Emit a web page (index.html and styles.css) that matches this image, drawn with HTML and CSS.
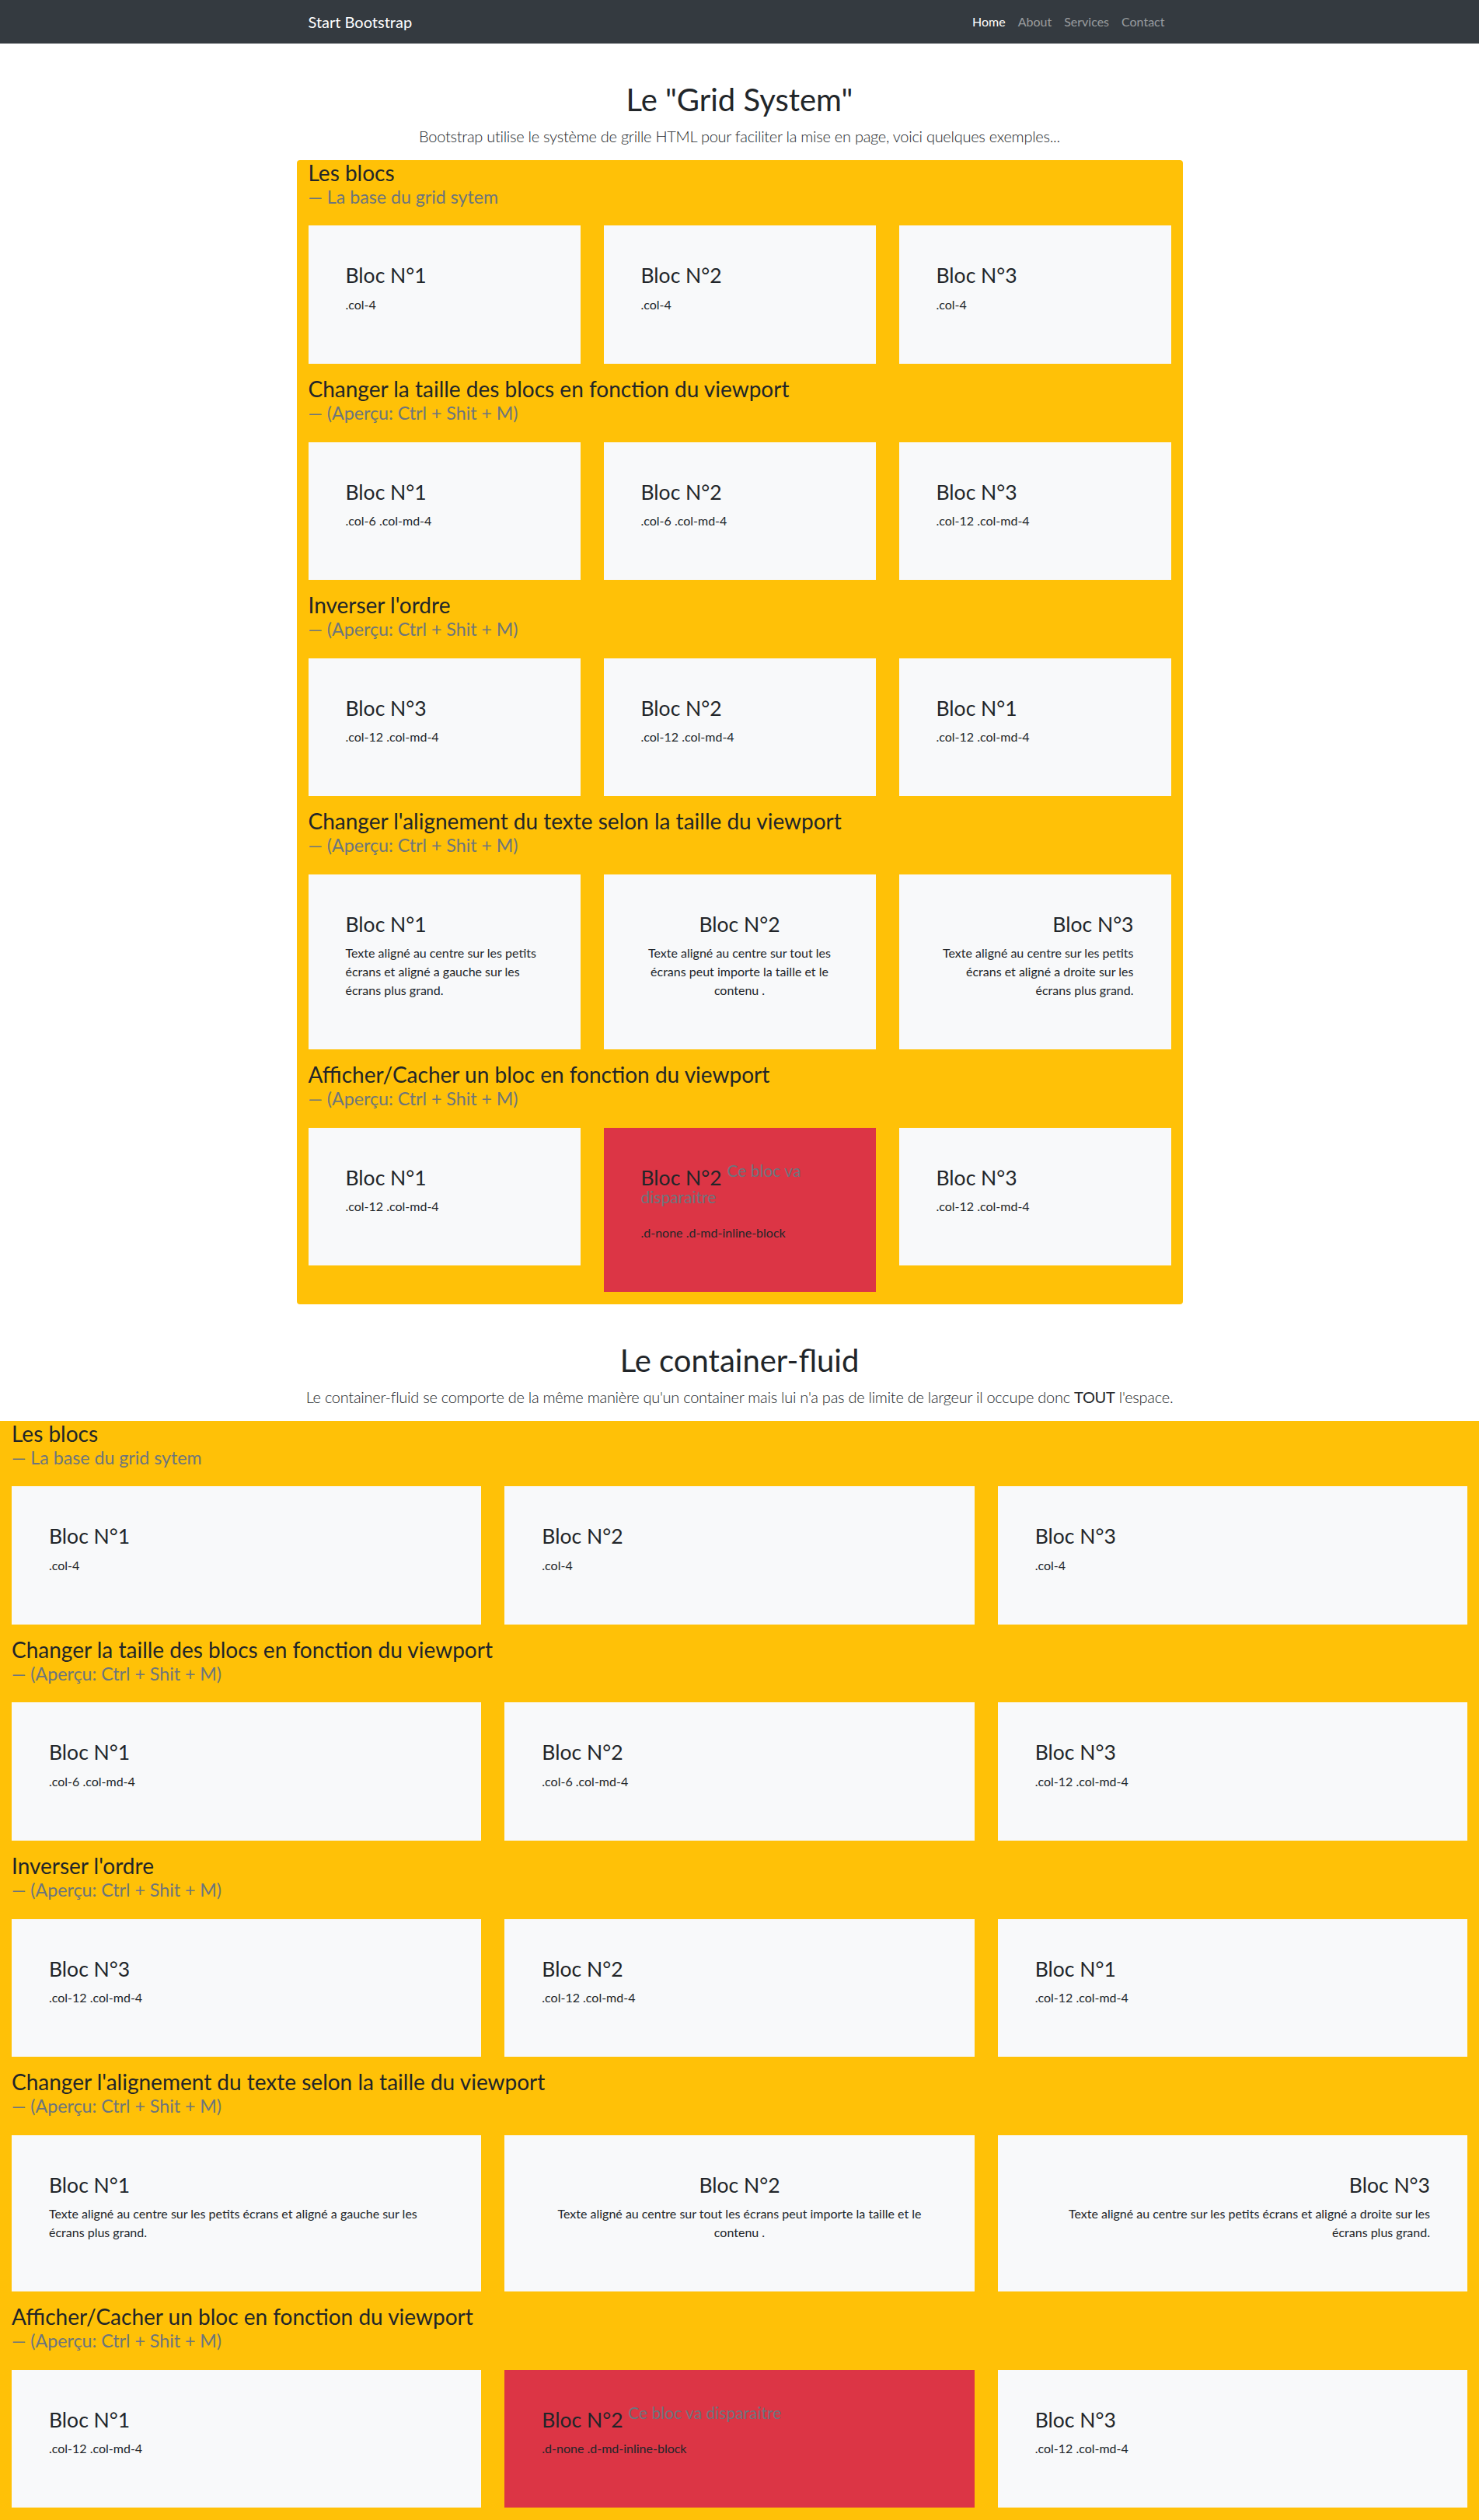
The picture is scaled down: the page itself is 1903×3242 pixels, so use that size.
FILE: index.html
```html
<!DOCTYPE html>
<html lang="fr">
<head>
<meta charset="utf-8">
<title>Grid System</title>
<link rel="stylesheet" href="styles.css">
</head>
<body>
<nav class="navbar">
  <div class="nav-inner">
    <a class="brand" href="#">Start Bootstrap</a>
    <ul class="nav-links">
      <li><a class="nav-link active" href="#">Home</a></li>
      <li><a class="nav-link" href="#">About</a></li>
      <li><a class="nav-link" href="#">Services</a></li>
      <li><a class="nav-link" href="#">Contact</a></li>
    </ul>
  </div>
</nav>

<header class="intro">
  <h1 class="intro-title">Le "Grid System"</h1>
  <p class="lead">Bootstrap utilise le système de grille HTML pour faciliter la mise en page, voici quelques exemples...</p>
</header>

<main class="box box-fixed">
  <h3 class="sec-title">Les blocs<span class="sec-sub">La base du grid sytem</span></h3>
  <div class="row">
    <div class="col"><div class="card"><h3 class="card-title">Bloc N°1</h3><p class="card-text">.col-4</p></div></div>
    <div class="col"><div class="card"><h3 class="card-title">Bloc N°2</h3><p class="card-text">.col-4</p></div></div>
    <div class="col"><div class="card"><h3 class="card-title">Bloc N°3</h3><p class="card-text">.col-4</p></div></div>
  </div>

  <h3 class="sec-title">Changer la taille des blocs en fonction du viewport<span class="sec-sub">(Aperçu: Ctrl + Shit + M)</span></h3>
  <div class="row">
    <div class="col"><div class="card"><h3 class="card-title">Bloc N°1</h3><p class="card-text">.col-6 .col-md-4</p></div></div>
    <div class="col"><div class="card"><h3 class="card-title">Bloc N°2</h3><p class="card-text">.col-6 .col-md-4</p></div></div>
    <div class="col"><div class="card"><h3 class="card-title">Bloc N°3</h3><p class="card-text">.col-12 .col-md-4</p></div></div>
  </div>

  <h3 class="sec-title">Inverser l'ordre<span class="sec-sub">(Aperçu: Ctrl + Shit + M)</span></h3>
  <div class="row">
    <div class="col"><div class="card"><h3 class="card-title">Bloc N°3</h3><p class="card-text">.col-12 .col-md-4</p></div></div>
    <div class="col"><div class="card"><h3 class="card-title">Bloc N°2</h3><p class="card-text">.col-12 .col-md-4</p></div></div>
    <div class="col"><div class="card"><h3 class="card-title">Bloc N°1</h3><p class="card-text">.col-12 .col-md-4</p></div></div>
  </div>

  <h3 class="sec-title">Changer l'alignement du texte selon la taille du viewport<span class="sec-sub">(Aperçu: Ctrl + Shit + M)</span></h3>
  <div class="row">
    <div class="col"><div class="card"><h3 class="card-title">Bloc N°1</h3><p class="card-text">Texte aligné au centre sur les petits écrans et aligné a gauche sur les écrans plus grand.</p></div></div>
    <div class="col"><div class="card align-center"><h3 class="card-title">Bloc N°2</h3><p class="card-text">Texte aligné au centre sur tout les écrans peut importe la taille et le contenu .</p></div></div>
    <div class="col"><div class="card align-right"><h3 class="card-title">Bloc N°3</h3><p class="card-text">Texte aligné au centre sur les petits écrans et aligné a droite sur les écrans plus grand.</p></div></div>
  </div>

  <h3 class="sec-title">Afficher/Cacher un bloc en fonction du viewport<span class="sec-sub">(Aperçu: Ctrl + Shit + M)</span></h3>
  <div class="row">
    <div class="col"><div class="card"><h3 class="card-title">Bloc N°1</h3><p class="card-text">.col-12 .col-md-4</p></div></div>
    <div class="col"><div class="card card-danger"><h3 class="card-title">Bloc N°2 <sup class="muted-sup">Ce bloc va disparaitre</sup></h3><p class="card-text">.d-none .d-md-inline-block</p></div></div>
    <div class="col"><div class="card"><h3 class="card-title">Bloc N°3</h3><p class="card-text">.col-12 .col-md-4</p></div></div>
  </div>
</main>

<header class="intro">
  <h1 class="intro-title">Le container-fluid</h1>
  <p class="lead">Le container-fluid se comporte de la même manière qu'un container mais lui n'a pas de limite de largeur il occupe donc <strong class="strong">TOUT</strong> l'espace.</p>
</header>

<section class="box box-fluid">
  <h3 class="sec-title">Les blocs<span class="sec-sub">La base du grid sytem</span></h3>
  <div class="row">
    <div class="col"><div class="card"><h3 class="card-title">Bloc N°1</h3><p class="card-text">.col-4</p></div></div>
    <div class="col"><div class="card"><h3 class="card-title">Bloc N°2</h3><p class="card-text">.col-4</p></div></div>
    <div class="col"><div class="card"><h3 class="card-title">Bloc N°3</h3><p class="card-text">.col-4</p></div></div>
  </div>

  <h3 class="sec-title">Changer la taille des blocs en fonction du viewport<span class="sec-sub">(Aperçu: Ctrl + Shit + M)</span></h3>
  <div class="row">
    <div class="col"><div class="card"><h3 class="card-title">Bloc N°1</h3><p class="card-text">.col-6 .col-md-4</p></div></div>
    <div class="col"><div class="card"><h3 class="card-title">Bloc N°2</h3><p class="card-text">.col-6 .col-md-4</p></div></div>
    <div class="col"><div class="card"><h3 class="card-title">Bloc N°3</h3><p class="card-text">.col-12 .col-md-4</p></div></div>
  </div>

  <h3 class="sec-title">Inverser l'ordre<span class="sec-sub">(Aperçu: Ctrl + Shit + M)</span></h3>
  <div class="row">
    <div class="col"><div class="card"><h3 class="card-title">Bloc N°3</h3><p class="card-text">.col-12 .col-md-4</p></div></div>
    <div class="col"><div class="card"><h3 class="card-title">Bloc N°2</h3><p class="card-text">.col-12 .col-md-4</p></div></div>
    <div class="col"><div class="card"><h3 class="card-title">Bloc N°1</h3><p class="card-text">.col-12 .col-md-4</p></div></div>
  </div>

  <h3 class="sec-title">Changer l'alignement du texte selon la taille du viewport<span class="sec-sub">(Aperçu: Ctrl + Shit + M)</span></h3>
  <div class="row">
    <div class="col"><div class="card"><h3 class="card-title">Bloc N°1</h3><p class="card-text">Texte aligné au centre sur les petits écrans et aligné a gauche sur les écrans plus grand.</p></div></div>
    <div class="col"><div class="card align-center"><h3 class="card-title">Bloc N°2</h3><p class="card-text">Texte aligné au centre sur tout les écrans peut importe la taille et le contenu .</p></div></div>
    <div class="col"><div class="card align-right"><h3 class="card-title">Bloc N°3</h3><p class="card-text">Texte aligné au centre sur les petits écrans et aligné a droite sur les écrans plus grand.</p></div></div>
  </div>

  <h3 class="sec-title">Afficher/Cacher un bloc en fonction du viewport<span class="sec-sub">(Aperçu: Ctrl + Shit + M)</span></h3>
  <div class="row">
    <div class="col"><div class="card"><h3 class="card-title">Bloc N°1</h3><p class="card-text">.col-12 .col-md-4</p></div></div>
    <div class="col"><div class="card card-danger"><h3 class="card-title">Bloc N°2 <sup class="muted-sup">Ce bloc va disparaitre</sup></h3><p class="card-text">.d-none .d-md-inline-block</p></div></div>
    <div class="col"><div class="card"><h3 class="card-title">Bloc N°3</h3><p class="card-text">.col-12 .col-md-4</p></div></div>
  </div>
</section>
</body>
</html>
```
FILE: styles.css
```css
* { box-sizing: border-box; }

html, body {
  margin: 0;
  padding: 0;
}

body {
  font-family: "Lato", "Open Sans", "Liberation Sans", sans-serif;
  font-size: 16px;
  line-height: 1.5;
  color: #212529;
  background: #fff;
}

/* ---------- navbar ---------- */
.navbar {
  background: #343a40;
  padding: 8px 16px;
}

.nav-inner {
  max-width: 1140px;
  margin: 0 auto;
  padding: 0 15px;
  display: flex;
  align-items: center;
  justify-content: space-between;
}

.brand {
  color: #fff;
  text-decoration: none;
  font-size: 20px;
  line-height: 30px;
  padding: 5px 0;
  white-space: nowrap;
}

.nav-links {
  list-style: none;
  margin: 0;
  padding: 0;
  display: flex;
}

.nav-link {
  display: block;
  padding: 8px;
  line-height: 24px;
  font-size: 16px;
  color: rgba(255, 255, 255, 0.5);
  text-decoration: none;
}

.nav-link.active {
  color: #fff;
}

/* ---------- intro headers ---------- */
.intro {
  margin: 48px 0 0;
  padding: 0 15px;
  text-align: center;
}

.intro-title {
  font-size: 40px;
  font-weight: 400;
  line-height: 1.2;
  margin: 0 0 8px;
}

.lead {
  font-size: 20px;
  font-weight: 300;
  line-height: 1.5;
  letter-spacing: -0.27px;
  margin: 0 0 16px;
}

.strong {
  font-weight: 400;
}

/* ---------- yellow boxes ---------- */
.box {
  background: #ffc107;
  padding: 0 15px;
}

.box-fixed {
  max-width: 1140px;
  margin: 0 auto;
  border-radius: 4px;
}

.box-fluid {
  width: 100%;
}

.sec-title {
  font-size: 28px;
  font-weight: 400;
  line-height: 1.2;
  margin: 0 0 8px;
}

.sec-sub {
  display: block;
  font-size: 23.2px;
  line-height: 26.88px;
  color: #6c757d;
}

.sec-sub::before {
  content: "\2014\00A0";
}

/* ---------- grid ---------- */
.row {
  display: flex;
  align-items: flex-start;
  margin: 0 -15px;
}

.col {
  flex: 0 0 33.333333%;
  max-width: 33.333333%;
  padding: 0 15px;
  margin: 16px 0;
}

.card {
  background: #f8f9fa;
  padding: 48px;
}

.card-danger {
  background: #dc3545;
}

.card-title {
  font-size: 26.5px;
  font-weight: 400;
  line-height: 33.6px;
  margin: 0 0 8px;
}

.card-text {
  margin: 0 0 16px;
}

.align-center { text-align: center; }
.align-right { text-align: right; }

.muted-sup {
  font-size: 21px;
  line-height: 0;
  position: relative;
  vertical-align: baseline;
  top: -10.5px;
  color: #6c757d;
}
```
